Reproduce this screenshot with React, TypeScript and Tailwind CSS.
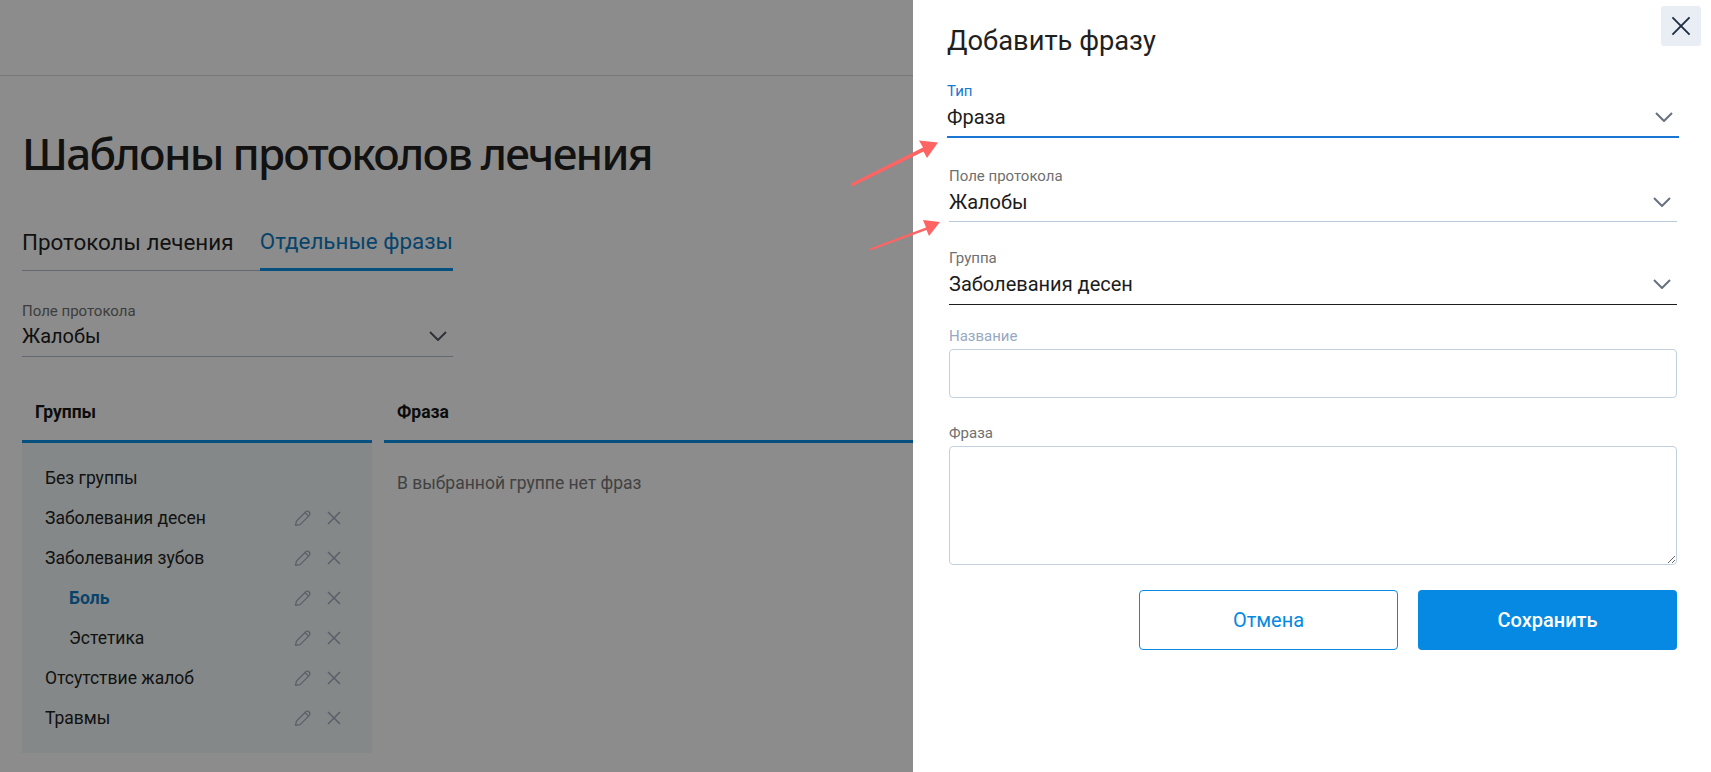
import React from 'react';

const groups = [
  { name: 'Без группы', actions: false },
  { name: 'Заболевания десен', actions: true },
  { name: 'Заболевания зубов', actions: true },
  { name: 'Боль', actions: true, sub: true, active: true },
  { name: 'Эстетика', actions: true, sub: true },
  { name: 'Отсутствие жалоб', actions: true },
  { name: 'Травмы', actions: true },
];

const Chevron = ({ className = '' }: { className?: string }) => (
  <svg viewBox="0 0 18 10" fill="none" stroke="currentColor" strokeWidth="2" className={`w-[18px] h-[10px] ${className}`}>
    <path d="M1 1l8 8 8-8" />
  </svg>
);

const Cross = ({ className = '', width = 1.5 }: { className?: string; width?: number }) => (
  <svg viewBox="0 0 14 14" fill="none" stroke="currentColor" strokeWidth={width} className={className}>
    <path d="M1 1l12 12M13 1L1 13" />
  </svg>
);

const Pencil = () => (
  <svg viewBox="0 0 18 18" fill="none" stroke="currentColor" strokeWidth="1.2" strokeLinejoin="round" className="w-[18px] h-[18px]">
    <path d="M1.5 16.5l1-4.5 9-9c1-1 2.6-1 3.6 0s1 2.600 0 3.600l-9 9z" />
    <path d="M11 3.600l3.400 3.400" />
  </svg>
);

const SelectField = ({
  label,
  value,
  labelClass = 'text-[#6f6f6f]',
  lineClass = 'border-b border-[#b9cbdc]',
  valueClass = 'mb-1',
  className = '',
}: {
  label: string;
  value: string;
  labelClass?: string;
  lineClass?: string;
  valueClass?: string;
  className?: string;
}) => (
  <div className={`${lineClass} ${className}`}>
    <div className={`h-5 pb-[2px] flex items-center text-[15px] ${labelClass}`}>{label}</div>
    <div className={`h-[30px] flex items-center justify-between text-[20px] text-[#1c1c1c] ${valueClass}`}>
      <span>{value}</span>
      <Chevron className="text-[#67707f] mr-[6px]" />
    </div>
  </div>
);

export default function App() {
  return (
    <div className="relative h-screen overflow-hidden bg-white font-['Roboto',sans-serif]">
      {/* page under the overlay */}
      <div className="h-[76px] border-b border-[#dadada]" />
      <div className="pl-[22px]">
        <h1 className="mt-[47px] h-[60px] flex items-center text-[44px] font-medium text-[#222] font-['Noto_Sans',sans-serif] tracking-[-1.7px]">
          Шаблоны протоколов лечения
        </h1>
        <div className="mt-[32px] flex w-[431px] h-[56px] border-b border-[#b4bccb] text-[22.4px] whitespace-nowrap">
          <div className="w-[238px] flex items-center text-[#1f1f1f]">Протоколы лечения</div>
          <div className="flex-1 flex items-center text-[#0e7cc4] border-b-[3px] border-[#0a93e8] -mb-px">Отдельные фразы</div>
        </div>

        <div className="mt-[31px] w-[431px] border-b border-[#b4bccb]">
          <div className="h-5 pb-[2px] flex items-center text-[15px] text-[#6f6f6f]">Поле протокола</div>
          <div className="h-[28px] mb-[6px] flex items-center justify-between text-[20px] text-[#1c1c1c]">
            <span>Жалобы</span>
            <Chevron className="text-[#555c68] mr-[6px]" />
          </div>
        </div>

        <div className="mt-[29px] flex gap-[12px]">
          <div className="w-[350px] shrink-0">
            <div className="h-[57px] flex items-center pl-[13px] pb-[1px] border-b-[3px] border-[#0a93e8] text-[17.5px] font-bold text-[#171717]">
              Группы
            </div>
            <div className="h-[310px] pt-[15px] bg-[#f0f8f8]">
              {groups.map((g) => (
                <div key={g.name} className="h-10 flex items-center justify-between text-[17.5px] text-[#222]">
                  <span className={`${g.sub ? 'pl-[47px]' : 'pl-[23px]'} ${g.active ? 'font-bold text-[#0e7cc4]' : ''}`}>{g.name}</span>
                  {g.actions && (
                    <span className="flex items-center gap-[15px] pr-[31px] text-[#a4acc0]">
                      <Pencil />
                      <Cross className="w-[14px] h-[14px]" />
                    </span>
                  )}
                </div>
              ))}
            </div>
          </div>
          <div className="flex-1">
            <div className="h-[57px] flex items-center pl-[13px] pb-[1px] border-b-[3px] border-[#0a93e8] text-[17.5px] font-bold text-[#171717]">
              Фраза
            </div>
            <div className="pl-[13px] pt-[28px] text-[17.5px] leading-6 text-[#777]">В выбранной группе нет фраз</div>
          </div>
        </div>
      </div>

      {/* overlay */}
      <div className="absolute inset-0 bg-black/45" />

      {/* drawer */}
      <div className="absolute top-0 right-0 bottom-0 w-[798px] bg-white pl-[34px] pr-[32px]">
        <button className="absolute top-[6px] right-[10px] w-10 h-10 rounded-[3px] bg-[#e8eef3] text-[#1d2d42] flex items-center justify-center">
          <Cross className="w-[20px] h-[20px]" width={1.3} />
        </button>
        <div className="mt-[18px] h-[46px] flex items-center text-[27.3px] text-[#1f1f1f]">Добавить фразу</div>

        <SelectField
          label="Тип"
          value="Фраза"
          labelClass="text-[#1976d2]"
          lineClass="border-b-2 border-[#1976d2]"
          className="mt-[18px]"
        />
        <div className="px-[2px]">
          <SelectField label="Поле протокола" value="Жалобы" className="mt-[29px]" />
          <SelectField
            label="Группа"
            value="Заболевания десен"
            lineClass="border-b border-[#1c1c1c]"
            valueClass="mb-[5px]"
            className="mt-[27px]"
          />

          <div className="mt-[22px] h-5 pb-[2px] flex items-center text-[15px] text-[#98a8c2]">Название</div>
          <input className="mt-[2px] block w-full h-[49px] border border-[#c3d0e0] rounded-[4px] bg-white" />

          <div className="mt-[26px] h-5 pb-[2px] flex items-center text-[15px] text-[#6f6f6f]">Фраза</div>
          <textarea className="mt-[2px] block w-full h-[119px] border border-[#c3d0e0] rounded-[4px] bg-white resize-y" />

          <div className="mt-[25px] flex justify-end gap-[20px]">
            <button className="w-[259px] h-[60px] rounded-[4px] border border-[#0589e2] text-[20px] text-[#0589e2] bg-white">Отмена</button>
            <button className="w-[259px] h-[60px] rounded-[4px] bg-[#0589e2] text-[20px] font-medium text-white">Сохранить</button>
          </div>
        </div>
      </div>

      {/* annotation arrows */}
      <svg className="absolute inset-0 w-full h-full pointer-events-none" fill="#ff6464">
        <path d="M851 183.500l72-36-4-7 19 2-11 15.500-3.500-6.500-71.500 35z" />
        <path d="M870 248.500l56-21-3-7.500 17 2-11 14-2.500-6-56 20.500z" />
      </svg>
    </div>
  );
}
